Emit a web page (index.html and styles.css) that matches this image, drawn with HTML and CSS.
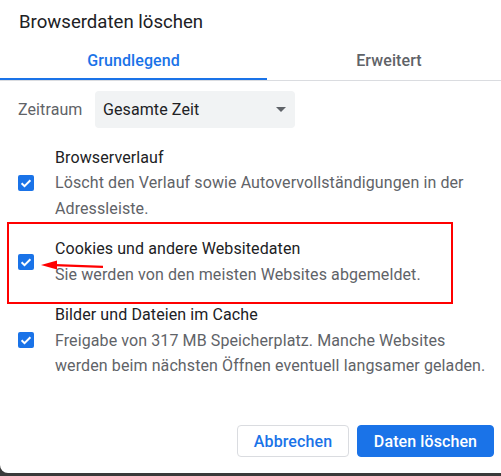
FILE: index.html
```html
<!DOCTYPE html>
<html lang="de">
<head>
  <meta charset="UTF-8">
  <meta name="viewport" content="width=device-width, initial-scale=1.0">
  <title>Browserdaten löschen</title>
  <link rel="stylesheet" href="styles.css">
</head>
<body>
  <div class="dialog">
    <h1 class="title">Browserdaten löschen</h1>

    <div class="tabs">
      <div class="tab active">Grundlegend</div>
      <div class="tab">Erweitert</div>
    </div>

    <div class="range">
      <span class="range-label">Zeitraum</span>
      <div class="select">
        <span>Gesamte Zeit</span>
        <span class="caret"></span>
      </div>
    </div>

    <div class="items">
      <div class="item">
        <span class="check"><svg viewBox="0 0 16 16" width="16" height="16"><path d="M3.6 8.2l2.9 2.9 5.9-5.9" fill="none" stroke="#fff" stroke-width="2"/></svg></span>
        <div class="item-text">
          <div class="item-title">Browserverlauf</div>
          <div class="item-desc">Löscht den Verlauf sowie Autovervollständigungen in der Adressleiste.</div>
        </div>
      </div>
      <div class="item">
        <span class="check"><svg viewBox="0 0 16 16" width="16" height="16"><path d="M3.6 8.2l2.9 2.9 5.9-5.9" fill="none" stroke="#fff" stroke-width="2"/></svg></span>
        <div class="item-text">
          <div class="item-title">Cookies und andere Websitedaten</div>
          <div class="item-desc">Sie werden von den meisten Websites abgemeldet.</div>
        </div>
      </div>
      <div class="item">
        <span class="check"><svg viewBox="0 0 16 16" width="16" height="16"><path d="M3.6 8.2l2.9 2.9 5.9-5.9" fill="none" stroke="#fff" stroke-width="2"/></svg></span>
        <div class="item-text">
          <div class="item-title">Bilder und Dateien im Cache</div>
          <div class="item-desc">Freigabe von 317 MB Speicherplatz. Manche Websites werden beim nächsten Öffnen eventuell langsamer geladen.</div>
        </div>
      </div>
    </div>

    <div class="actions">
      <button class="btn">Abbrechen</button>
      <button class="btn primary">Daten löschen</button>
    </div>

    <!-- annotation -->
    <div class="highlight"></div>
    <svg class="pointer" width="70" height="16" viewBox="0 0 70 16">
      <path d="M14 7.2 L62 8.8" stroke="#f00" stroke-width="2.2" fill="none"/>
      <path d="M0 7 L16 2.5 L16 11.5 Z" fill="#f00"/>
    </svg>
  </div>
</body>
</html>
```

FILE: styles.css
```css
html, body { margin: 0; overflow: hidden; }
body { background: #3a3a3a; font-family: Roboto, "Noto Sans", sans-serif; letter-spacing: 0.1px; width: 501px; height: 476px; }

.dialog { position: relative; width: 511px; height: 473px; background: #fff; border-radius: 0 0 8px 8px; box-sizing: border-box; }

.title { margin: 0; padding: 10px 0 0 19px; height: 40px; box-sizing: border-box; font-size: 18.6px; line-height: 24px; font-weight: 400; letter-spacing: 0; color: #202124; }

.tabs { display: flex; height: 41px; border-bottom: 1px solid #dadce0; box-sizing: border-box; }
.tab { display: flex; align-items: center; justify-content: center; font-size: 16px; font-weight: 500; color: #5f6368; }
.tab:first-child { width: 267px; }
.tab:last-child { flex: 1; }
.tab.active { color: #1a73e8; box-shadow: inset 0 -2px #1a73e8; }

.range { display: flex; align-items: center; margin-top: 10px; padding-left: 18px; height: 37px; }
.range-label { width: 77px; font-size: 16px; color: #5f6368; }
.select { display: flex; align-items: center; justify-content: space-between; width: 200px; height: 37px; box-sizing: border-box; padding: 0 9px 0 8px; background: #f1f3f4; border-radius: 4px; font-size: 16px; color: #202124; }
.caret { width: 0; height: 0; border-left: 5px solid transparent; border-right: 5px solid transparent; border-top: 5px solid #5f6368; }

.items { display: flex; flex-direction: column; gap: 15px; margin-top: 16.5px; }
.item { display: flex; align-items: center; }
.check { flex: none; width: 16px; height: 16px; margin: 0 21px 0 18px; background: #1a73e8; border-radius: 2px; }
.check svg { display: block; }
.item-text { font-size: 16px; line-height: 25.5px; padding-right: 20px; }
.item-title { color: #202124; }
.item-desc { color: #5f6368; }

.actions { position: absolute; right: 17px; bottom: 16px; display: flex; gap: 8px; }
.btn { height: 32px; padding: 0; font-family: inherit; font-size: 16px; font-weight: 500; letter-spacing: 0.1px; border-radius: 4px; border: 1px solid #dadce0; background: #fff; color: #1a73e8; }
.btn:first-child { width: 112px; }
.btn.primary { width: 137px; background: #1a73e8; border-color: #1a73e8; color: #fff; }

.highlight { position: absolute; left: 7px; top: 222px; width: 446px; height: 82px; box-sizing: border-box; border: 2.5px solid #f00; }
.pointer { position: absolute; left: 41px; top: 258px; }
```
